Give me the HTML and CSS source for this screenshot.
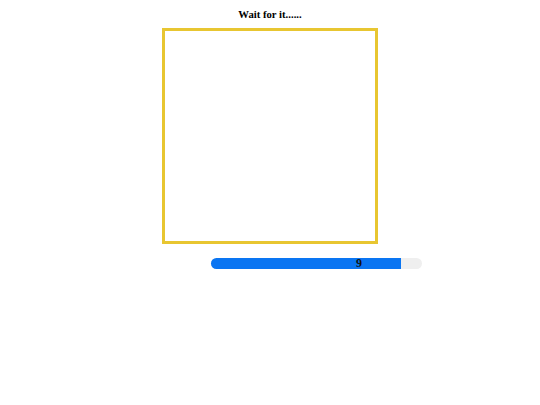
FILE: index.html
```html
<!DOCTYPE html>
<html>
<head>
<meta charset="utf-8">
<link rel="stylesheet" href="styles.css">
</head>
<body>
<div class="page">
  <h1 class="title">Wait for it......</h1>
  <div class="box"></div>
  <div class="progress-row">
    <div class="progress">
      <div class="fill" style="width: 90%"></div>
      <span class="value">9</span>
    </div>
  </div>
</div>
</body>
</html>
```
FILE: styles.css
```css
html, body {
  margin: 0;
  padding: 0;
  background: #ffffff;
}
.page {
  width: 540px;
  display: flex;
  flex-direction: column;
  align-items: center;
  font-family: "Liberation Serif", "Times New Roman", serif;
}
.title {
  margin: 8px 0 0 0;
  font-size: 10.7px;
  font-weight: bold;
  line-height: 13px;
  color: #000;
}
.box {
  margin-top: 7px;
  width: 210px;
  height: 210px;
  border: 3px solid #e8c631;
}
.progress-row {
  width: 540px;
  display: flex;
  padding-left: 211px;
  box-sizing: border-box;
  margin-top: 14px;
}
.progress {
  position: relative;
  width: 211px;
  height: 11px;
  background: #efefef;
  border-radius: 6px;
}
.fill {
  height: 100%;
  background: #0a75f2;
  border-radius: 6px 0 0 6px;
}
.value {
  position: absolute;
  left: 145px;
  top: -1px;
  font-size: 12px;
  font-weight: bold;
  line-height: 13px;
  color: #111;
}
```
